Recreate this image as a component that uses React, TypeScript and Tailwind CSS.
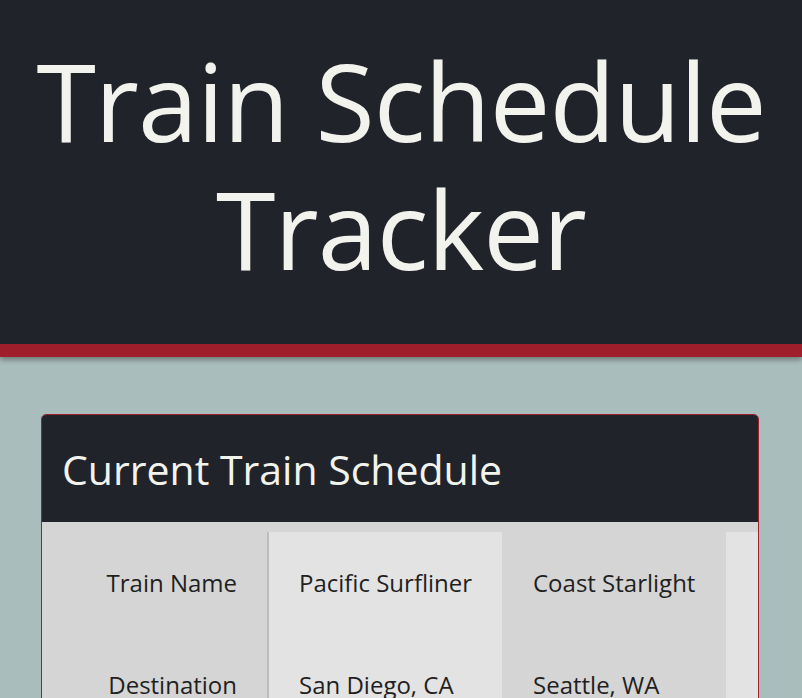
export default function App() {
  const rows = [
    { label: "Train Name", values: ["Pacific Surfliner", "Coast Starlight"] },
    { label: "Destination", values: ["San Diego, CA", "Seattle, WA"] },
  ];
  return (
    <div className="min-h-[698px] w-full overflow-hidden bg-[#aabdbd] font-['Open_Sans',sans-serif]">
      {/* header */}
      <header className="border-b-[13px] border-[#9e1f2b] bg-[#21232b] shadow-[0_3px_5px_rgba(0,0,0,0.35)]">
        <h1 className="flex h-[344px] flex-col items-center justify-center pb-[14px] text-center text-[108px] font-normal leading-[128px] tracking-[-1px] text-[#f3f3ee]">
          <span>Train Schedule</span>
          <span>Tracker</span>
        </h1>
      </header>

      {/* schedule card */}
      <section className="ml-[41px] mr-[43px] mt-[57px] overflow-hidden rounded-[5px] border border-[#9e1f2b] bg-[#d5d5d5]">
        <div className="flex h-[107px] items-center bg-[#21232b] px-[20px] pt-[2px]">
          <h2 className="text-[41px] font-normal tracking-[0px] text-[#f3f3ee]">Current Train Schedule</h2>
        </div>
        <div className="pt-[10px]">
          <table className="w-[800px] table-fixed border-collapse text-[24px] text-[#1f1f1f]">
            <colgroup>
              <col className="w-[226px]" />
              <col className="w-[234px]" />
              <col className="w-[224px]" />
              <col className="w-[116px]" />
            </colgroup>
            <tbody>
              {rows.map((r) => (
                <tr key={r.label} className="h-[102px]">
                  <th className="bg-[#d5d5d5] pr-[30px] text-right font-normal">{r.label}</th>
                  <td className="whitespace-nowrap border-l-2 border-[#bcbcbc] bg-[#e3e3e3] pl-[30px]">{r.values[0]}</td>
                  <td className="whitespace-nowrap bg-[#d5d5d5] pl-[31px]">{r.values[1]}</td>
                  <td className="bg-[#e3e3e3]" />
                </tr>
              ))}
            </tbody>
          </table>
        </div>
      </section>
    </div>
  );
}
